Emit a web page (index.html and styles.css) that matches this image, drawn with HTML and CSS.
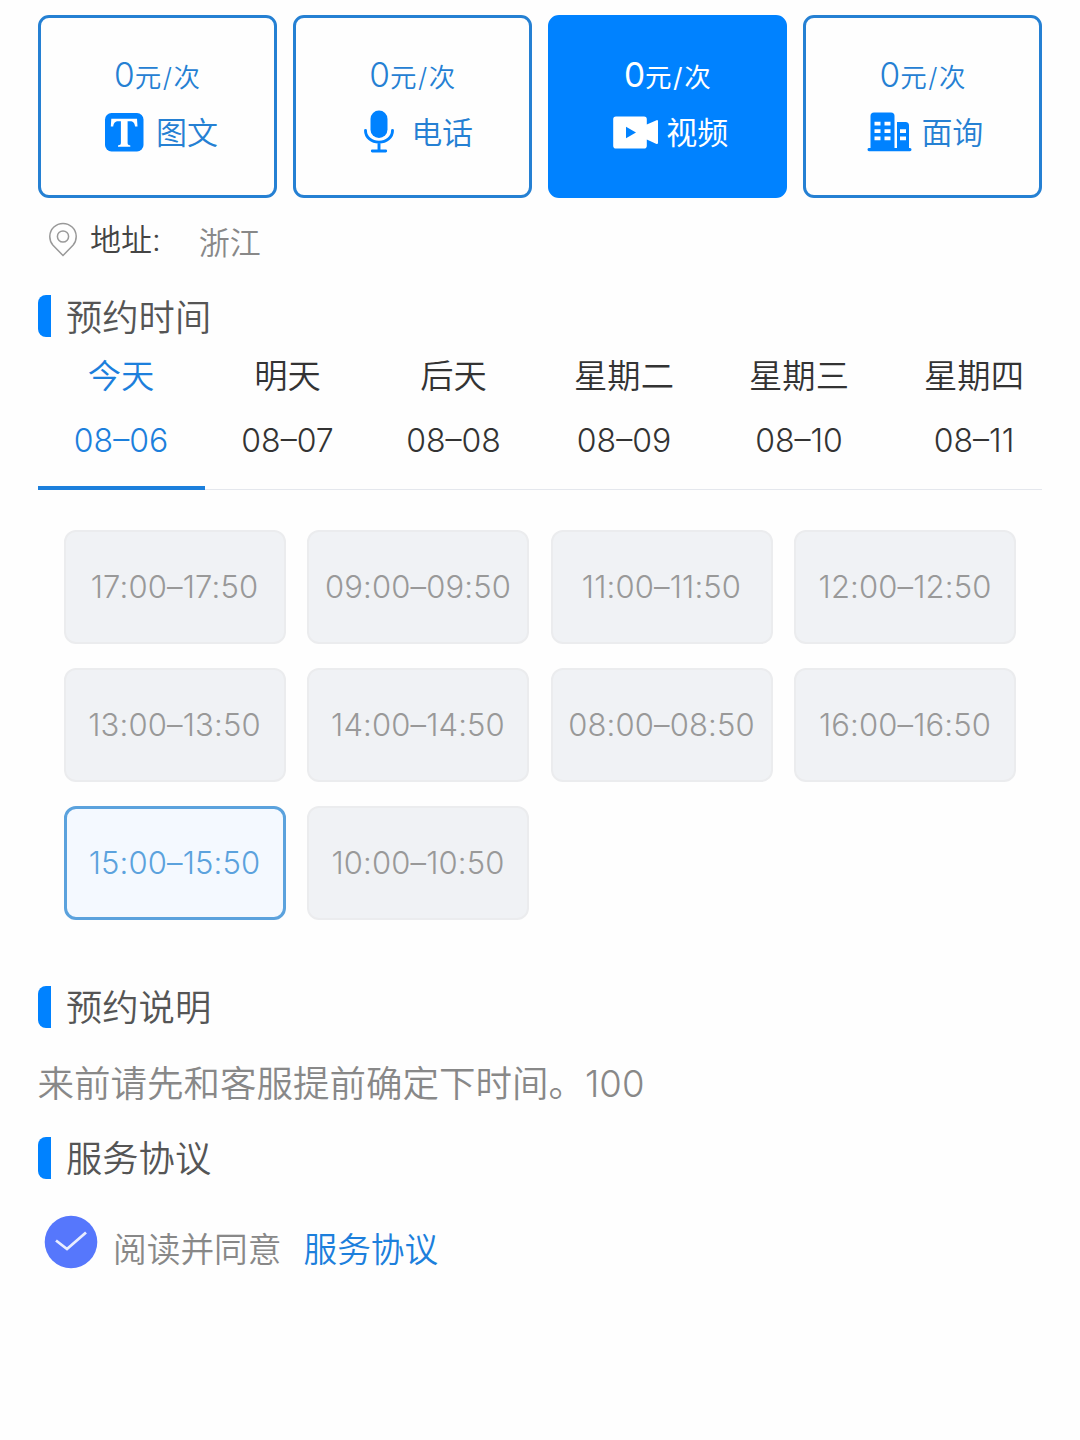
FILE: index.html
```html
<!DOCTYPE html>
<html lang="zh-CN">
<head>
<meta charset="utf-8">
<title>预约</title>
<link rel="stylesheet" href="styles.css">
</head>
<body>
<main class="page">
  <section class="modes">
    <div class="mode">
      <div class="price"><span class="amount">0</span>元<span class="slash">/</span>次</div>
      <div class="kind">
        <svg class="icon" width="52" height="46" viewBox="0 0 52 46"><rect x="6" y="4" width="38.500" height="38.500" rx="6.500" fill="#0082ff"/><path d="M12.300 9.800H38L38.500 17.500H36.100C35.500 13.800 34.200 12.300 31 12.300H28.600V33.800C28.600 35.600 29.300 36.200 31.300 36.400V37.800H19V36.400C21 36.200 21.900 35.600 21.900 33.800V12.300H19.400C16.100 12.300 14.800 13.800 14.200 17.500H11.800Z" fill="#fff"/></svg>
        <span>图文</span>
      </div>
    </div>
    <div class="mode">
      <div class="price"><span class="amount">0</span>元<span class="slash">/</span>次</div>
      <div class="kind">
        <svg class="icon" width="52" height="46" viewBox="0 0 52 46"><rect x="16.500" y="1.500" width="17" height="27.500" rx="8.500" fill="#0082ff"/><path d="M11.500 21.500C11.500 28.500 17.500 33.200 25 33.200S38.500 28.500 38.500 21.500M25 33.500V42M18.300 42H31.700" fill="none" stroke="#0082ff" stroke-width="2.900" stroke-linecap="round"/></svg>
        <span>电话</span>
      </div>
    </div>
    <div class="mode mode-active">
      <div class="price"><span class="amount">0</span>元<span class="slash">/</span>次</div>
      <div class="kind">
        <svg class="icon" width="52" height="46" viewBox="0 0 52 46"><path d="M7 7.500H35Q37.800 7.500 37.800 10.300V15.600L47 11.400Q49 10.500 49 12.500V33.500Q49 35.700 47 34.700L37.800 30.500V36.700Q37.800 39.500 35 39.500H7Q4.200 39.500 4.200 36.700V10.300Q4.200 7.500 7 7.500Z" fill="#fff"/><path d="M17 17.800L27 23.500L17 29.200Z" fill="#0082ff"/></svg>
        <span>视频</span>
      </div>
    </div>
    <div class="mode">
      <div class="price"><span class="amount">0</span>元<span class="slash">/</span>次</div>
      <div class="kind">
        <svg class="icon" width="52" height="46" viewBox="0 0 52 46"><path d="M6.500 39V7Q6.500 3.500 10 3.500H27Q30.500 3.500 30.500 7V39H33V13H41.500Q45 13 45 16.500V39H46Q47.500 39 47.500 40.500T46 42.200H5Q3.500 42.200 3.500 40.500T5 39Z" fill="#0082ff"/><path d="M10.500 12.800h6v3.800h-6zM20.500 12.800h6v3.800h-6zM10.500 20.200h6v3.800h-6zM20.500 20.200h6v3.800h-6zM10.500 27.500h6v3.800h-6zM20.500 27.500h6v3.800h-6zM36 20.200h6v3.800h-6zM36 27.500h6v3.800h-6z" fill="#fff"/></svg>
        <span>面询</span>
      </div>
    </div>
  </section>

  <section class="address">
    <svg width="30" height="38" viewBox="0 0 30 38" fill="none" stroke="#999" stroke-width="1.500"><path d="M15 35.500L5 25.200A13.200 13.200 0 1 1 25 25.200Z"/><circle cx="15" cy="16.500" r="5.600"/></svg>
    <span class="address-label">地址:</span>
    <span class="address-value">浙江</span>
  </section>

  <h2 class="heading"><span>预约时间</span></h2>
  <nav class="days">
    <div class="day day-active"><span>今天</span><span class="date">08–06</span></div>
    <div class="day"><span>明天</span><span class="date">08–07</span></div>
    <div class="day"><span>后天</span><span class="date">08–08</span></div>
    <div class="day day-wide"><span>星期二</span><span class="date">08–09</span></div>
    <div class="day day-wide"><span>星期三</span><span class="date">08–10</span></div>
    <div class="day day-wide"><span>星期四</span><span class="date">08–11</span></div>
  </nav>

  <section class="slots">
    <div class="slot">17:00–17:50</div>
    <div class="slot">09:00–09:50</div>
    <div class="slot">11:00–11:50</div>
    <div class="slot">12:00–12:50</div>
    <div class="slot">13:00–13:50</div>
    <div class="slot">14:00–14:50</div>
    <div class="slot">08:00–08:50</div>
    <div class="slot">16:00–16:50</div>
    <div class="slot slot-active">15:00–15:50</div>
    <div class="slot">10:00–10:50</div>
  </section>

  <h2 class="heading"><span>预约说明</span></h2>
  <p class="note">来前请先和客服提前确定下时间。100</p>

  <h2 class="heading"><span>服务协议</span></h2>
  <div class="agree">
    <svg width="54" height="54" viewBox="0 0 54 54"><circle cx="27" cy="27" r="26.300" fill="#5677fc"/><path d="M12 25.500L23 34L42 17.500" fill="none" stroke="#e8edff" stroke-width="2.800"/></svg>
    <span class="agree-text">阅读并同意</span>
    <a class="agree-link">服务协议</a>
  </div>
</main>
</body>
</html>
```

FILE: styles.css
```css
* { box-sizing: border-box; }
body {
  margin: 0;
  background: #fefefe;
  font-family: Inter, "Noto Sans CJK SC", sans-serif;
  font-weight: 350;
  color: #333;
}
.page {
  height: 1440px;
  padding: 15px 38px 0 37.5px;
  overflow: hidden;
  white-space: nowrap;
}
.modes {
  display: grid;
  grid-template-columns: repeat(4, 1fr);
  gap: 16px;
}
.mode {
  height: 183px;
  padding-top: 35px;
  border: 3px solid #2580d3;
  border-radius: 11px;
  color: #2580d3;
}
.mode-active {
  background: #0082ff;
  border-color: #0082ff;
  color: #fff;
  font-weight: 400;
}
.price {
  height: 44px;
  line-height: 44px;
  text-align: center;
  font-size: 26.5px;
}
.amount { font-size: 33.5px; }
.slash { margin: 0 1.5px; }
.kind {
  display: flex;
  align-items: center;
  height: 46px;
  margin-top: 12px;
  padding-left: 58px;
  font-size: 31px;
}
.kind span { margin-top: -4px; }
.icon { flex: none; margin-right: 5.5px; }
.address {
  display: flex;
  height: 84px;
  padding: 22px 0 0 10.5px;
  font-size: 31px;
  line-height: 40px;
}
.address-label { margin-left: 12px; color: #444; }
.address-value { margin: 3px 0 0 38px; color: #888; }
.heading {
  display: flex;
  align-items: center;
  height: 42px;
  margin: 0;
  font-size: 36.3px;
  font-weight: 350;
  color: #555;
}
.heading span { margin-top: -3px; }
.heading::before {
  content: "";
  width: 13px;
  height: 42px;
  margin-right: 15.5px;
  border-radius: 8px 0 0 8px;
  background: #0082ff;
}
.address + .heading { margin-top: 13px; }
.days {
  display: flex;
  height: 153px;
  border-bottom: 1px solid #e4e7ed;
}
.day {
  flex: none;
  display: flex;
  flex-direction: column;
  align-items: center;
  width: 166px;
  height: 153px;
  padding-top: 13px;
  font-size: 33.3px;
  line-height: 52px;
}
.day-wide { width: 175px; }
.day-active { width: 167px; color: #1c7fdc; border-bottom: 4px solid #1c7fdc; }
.date { margin-top: 13px; font-size: 32px; }
.slots {
  display: grid;
  grid-template-columns: repeat(4, 222px);
  grid-auto-rows: 114px;
  gap: 24.2px 21.5px;
  padding: 40px 26px 65.6px;
}
.slot {
  display: flex;
  align-items: center;
  justify-content: center;
  padding-bottom: 1px;
  border: 2px solid #ebecee;
  border-radius: 12px;
  background: #f0f2f5;
  color: #999;
  font-size: 31px;
  letter-spacing: 0.15px;
}
.slot-active { border: 3px solid #5ba2dd; background: #f4f9ff; color: #5ba2dd; }
.note {
  margin: 28px 0 25px;
  line-height: 56px;
  font-size: 36.5px;
  color: #888;
}
.agree {
  display: flex;
  align-items: center;
  padding: 34px 0 0 6.5px;
  font-size: 33.7px;
}
.agree svg { margin-top: -1px; }
.agree-text { margin: 10px 0 0 15px; color: #888; }
.agree-link { margin: 10px 0 0 22px; color: #1c7fdc; }
```
